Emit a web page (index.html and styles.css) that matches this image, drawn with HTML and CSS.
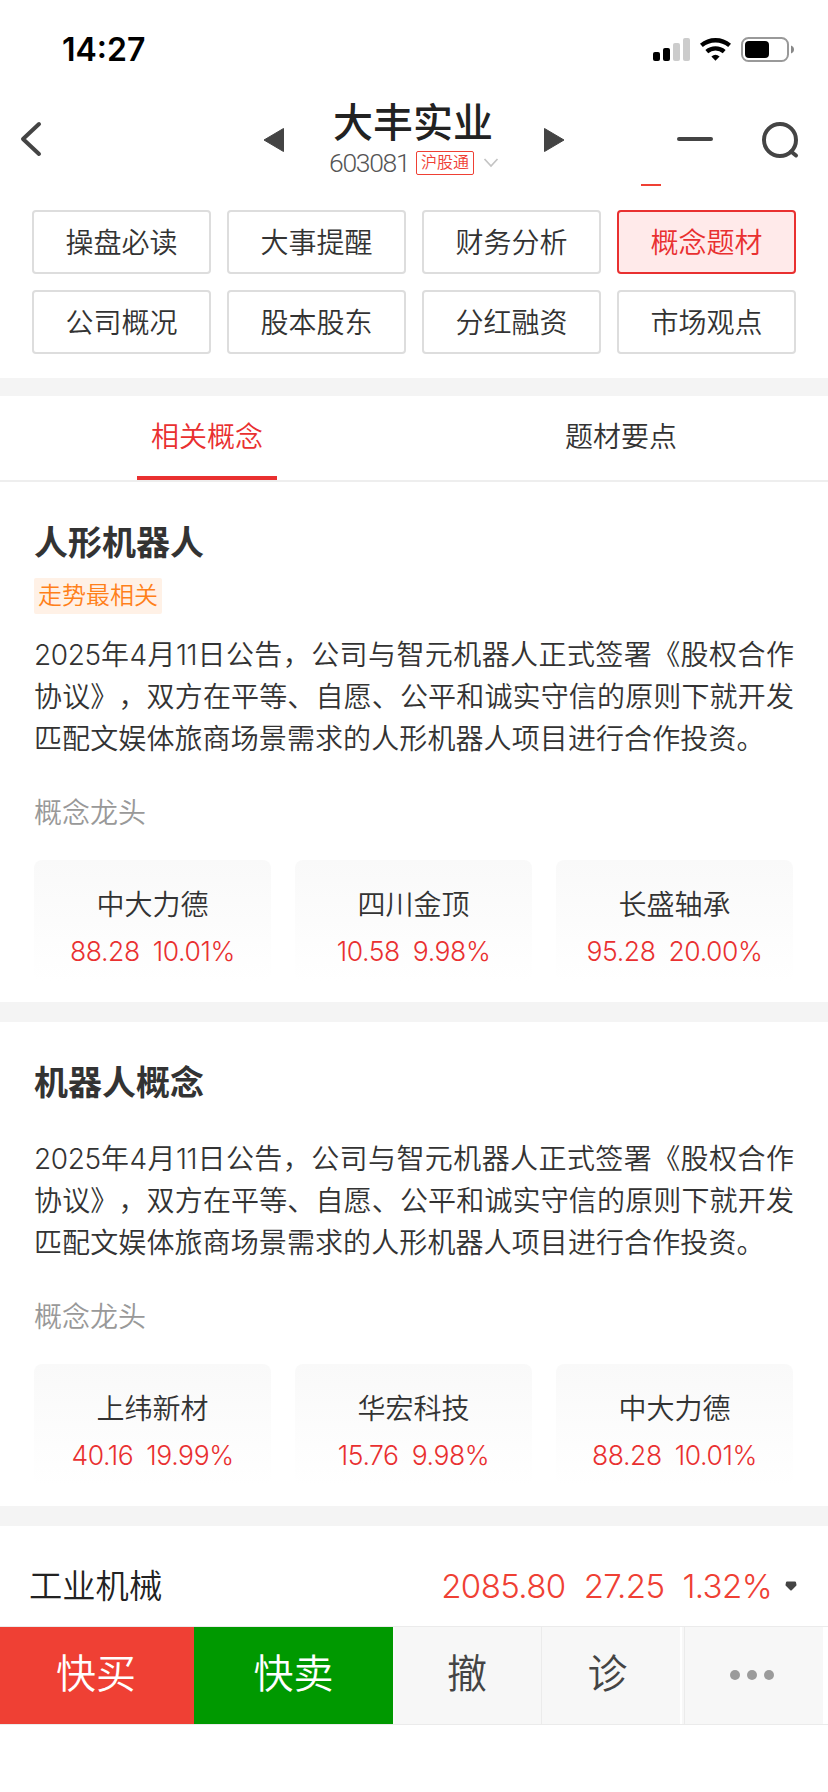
FILE: index.html
```html
<!DOCTYPE html>
<html lang="zh-CN">
<head>
<meta charset="utf-8">
<title>大丰实业</title>
<link rel="stylesheet" href="styles.css">
</head>
<body>
<div class="status">
  <span class="clock">14:27</span>
  <svg class="status-icons" width="144" height="28" viewBox="0 0 144 28">
    <rect x="1" y="15" width="7" height="9" rx="2"/>
    <rect x="11" y="11" width="7" height="13" rx="2"/>
    <rect x="21" y="6" width="7" height="18" rx="2" fill="#ccc"/>
    <rect x="31" y="1" width="7" height="23" rx="2" fill="#ccc"/>
    <g fill="none" stroke="#000" stroke-width="4.4">
      <path d="M49.4 8.4a22 22 0 0 1 28.2 0"/>
      <path d="M54.8 14.6a13.5 13.5 0 0 1 17.4 0"/>
    </g>
    <path d="M59.400 19.400q4.100-3.200 8.200 0l-4.100 4.300z"/>
    <rect x="90" y="1" width="46" height="23" rx="6.500" fill="none" stroke="#999" stroke-width="2"/>
    <rect x="93" y="4" width="24" height="17" rx="4"/>
    <path d="M139 8.500q3 1.200 3 4t-3 4z" fill="#888"/>
  </svg>
</div>

<header class="header">
  <svg class="back" width="24" height="38" viewBox="0 0 24 38"><path d="M20 4 4 19l16 15" fill="none" stroke="#444" stroke-width="4" stroke-linecap="round" stroke-linejoin="round"/></svg>
  <svg class="prev" width="22" height="26" viewBox="0 0 22 26"><path d="M20.500 1.500v23L1 13z" fill="#444" stroke="#444" stroke-linejoin="round"/></svg>
  <div class="stock">
    <h1 class="stock-name">大丰实业</h1>
    <div class="stock-meta">
      <span class="code">603081</span>
      <span class="hk">沪股通</span>
      <svg width="16" height="10" viewBox="0 0 16 10"><path d="m1.500 1 6.500 7L14.500 1" fill="none" stroke="#c4c4c4" stroke-width="1.700"/></svg>
    </div>
  </div>
  <svg class="next" width="22" height="26" viewBox="0 0 22 26"><path d="M1.500 1.500v23L21 13z" fill="#444" stroke="#444" stroke-linejoin="round"/></svg>
  <i class="minus"></i>
  <svg class="search" width="40" height="40" viewBox="0 0 40 40"><g fill="none" stroke="#444" stroke-width="4" stroke-linecap="round"><circle cx="20" cy="20" r="16"/><path d="m31 31.500 5 4"/></g></svg>
  <i class="mark"></i>
</header>

<nav class="tiles">
  <a class="tile">操盘必读</a><a class="tile">大事提醒</a><a class="tile">财务分析</a><a class="tile tile-on">概念题材</a>
  <a class="tile">公司概况</a><a class="tile">股本股东</a><a class="tile">分红融资</a><a class="tile">市场观点</a>
</nav>

<nav class="tabs">
  <a class="tab tab-on">相关概念</a>
  <a class="tab">题材要点</a>
</nav>

<section class="concept">
  <h2 class="concept-name">人形机器人</h2>
  <div class="tag-row"><span class="tag">走势最相关</span></div>
  <p class="desc"><span class="line fill"><span class="num">2025</span>年4月<span class="num">11</span>日公告，公司与智元机器人正式签署《股权合作</span><span class="line fill">协议》，双方在平等、自愿、公平和诚实守信的原则下就开发</span><span class="line">匹配文娱体旅商场景需求的人形机器人项目进行合作投资。</span></p>
  <h3 class="lead">概念龙头</h3>
  <div class="cards">
    <div class="card"><b>中大力德</b><p><span>88.28</span><span>10.01%</span></p></div>
    <div class="card"><b>四川金顶</b><p><span>10.58</span><span>9.98%</span></p></div>
    <div class="card"><b>长盛轴承</b><p><span>95.28</span><span>20.00%</span></p></div>
  </div>
</section>

<section class="concept">
  <h2 class="concept-name">机器人概念</h2>
  <p class="desc"><span class="line fill"><span class="num">2025</span>年4月<span class="num">11</span>日公告，公司与智元机器人正式签署《股权合作</span><span class="line fill">协议》，双方在平等、自愿、公平和诚实守信的原则下就开发</span><span class="line">匹配文娱体旅商场景需求的人形机器人项目进行合作投资。</span></p>
  <h3 class="lead">概念龙头</h3>
  <div class="cards">
    <div class="card"><b>上纬新材</b><p><span>40.16</span><span>19.99%</span></p></div>
    <div class="card"><b>华宏科技</b><p><span>15.76</span><span>9.98%</span></p></div>
    <div class="card"><b>中大力德</b><p><span>88.28</span><span>10.01%</span></p></div>
  </div>
</section>

<div class="industry">
  <span class="industry-name">工业机械</span>
  <span class="quote q1">2085.80</span><span class="quote q2">27.25</span><span class="quote q3">1.32%</span>
  <svg width="12" height="10" viewBox="0 0 12 10"><path d="M2 1.500h8L10.500 4 6 8.500 1.500 4z" fill="#444" stroke="#444" stroke-width="2" stroke-linejoin="round"/></svg>
</div>

<footer class="actions">
  <a class="act buy">快买</a>
  <a class="act sell">快卖</a>
  <a class="act cancel">撤</a>
  <a class="act diag">诊</a>
  <a class="act more"><i></i><i></i><i></i></a>
</footer>
</body>
</html>
```
FILE: styles.css
```css
* { box-sizing: border-box; margin: 0; padding: 0; }
body {
  width: 828px;
  height: 1792px;
  overflow: hidden;
  background: #fff;
  color: #333;
  font-family: Inter, "Noto Sans CJK SC", sans-serif;
  font-size: 28px;
  font-weight: 350;
  text-spacing-trim: space-all;
}
svg { display: block; flex: none; }
h1, h2, h3, b, i { font-style: normal; font-weight: inherit; }

.status {
  height: 100px;
  padding: 35px 32px 0 62px;
  display: flex;
  justify-content: space-between;
  align-items: flex-start;
}
.clock { font-size: 32px; line-height: 30px; font-weight: 600; color: #000; }
.status-icons { margin-top: 2px; }

.header {
  position: relative;
  height: 110px;
  display: flex;
  align-items: flex-start;
  color: #222;
}
.back { margin: 20px 0 0 19px; }
.prev { margin: 27px 0 0 220px; }
.stock { width: 171px; margin-left: 44px; }
.stock-name { font-size: 40px; line-height: 46px; font-weight: 500; padding-left: 4px; white-space: nowrap; }
.stock-meta { display: flex; align-items: center; height: 24px; margin-top: 5px; }
.code {
  width: 87px;
  font: 300 26.5px/22px Roboto, sans-serif;
  letter-spacing: -1.3px;
  color: #555;
}
.hk {
  width: 58px;
  height: 24px;
  margin-right: 9px;
  border: 1px solid #ef4034;
  border-radius: 2px;
  font-size: 16px;
  line-height: 21px;
  text-align: center;
  color: #ef4034;
}
.next { margin: 27px 0 0 43px; }
.minus { width: 36px; height: 4px; margin: 37px 0 0 112px; border-radius: 2px; background: #444; }
.search { margin: 20px 0 0 47px; }
.mark { position: absolute; left: 641px; top: 84px; width: 20px; height: 2px; background: #ef4034; }

.tiles {
  display: grid;
  grid-template-columns: repeat(4, 179px);
  gap: 16px;
  padding: 0 32px 24px;
}
.tile {
  height: 64px;
  border: 2px solid #ddd;
  border-radius: 4px;
  line-height: 62px;
  text-align: center;
}
.tile-on { border-color: #e93030; background: #ffeaea; color: #e93030; }

.tabs {
  height: 104px;
  display: flex;
  justify-content: space-around;
  border-top: 18px solid #f4f4f4;
  border-bottom: 2px solid #eee;
}
.tab { width: 140px; height: 84px; line-height: 82px; text-align: center; }
.tab-on { border-bottom: 4px solid #e93030; color: #e93030; }

.concept { height: 520px; padding: 39px 34px 0; }
.concept + .concept { height: 504px; border-top: 20px solid #f4f4f4; }
.concept-name { font-size: 34px; line-height: 44px; font-weight: 700; }
.tag-row { height: 36px; margin-top: 13px; display: flex; }
.tag {
  padding: 0 4px;
  border-radius: 2px;
  background: #fff1e6;
  font-size: 24px;
  line-height: 36px;
  color: #ff801a;
}
.desc { margin-top: 20px; }
.concept-name + .desc { margin-top: 33px; }
.line { display: block; height: 42px; line-height: 42px; letter-spacing: 0.1px; white-space: nowrap; }
.num { letter-spacing: -0.4px; }
.fill { text-align-last: justify; }
.lead { margin-top: 32px; font-size: 28px; line-height: 42px; color: #999; }
.cards { display: grid; grid-template-columns: repeat(3, 237px); gap: 24px; margin-top: 26px; }
.card {
  height: 122px;
  padding-top: 24px;
  border-radius: 8px;
  background: linear-gradient(#f9f9f9, #fff);
  text-align: center;
}
.card b { display: block; line-height: 42px; }
.card p {
  display: flex;
  justify-content: center;
  gap: 13px;
  margin-top: 4px;
  font-size: 26.5px;
  line-height: 42px;
  letter-spacing: -0.4px;
  color: #e93030;
}

.industry {
  height: 120px;
  padding: 20px 31px 0 29px;
  border-top: 20px solid #f4f4f4;
  display: flex;
  align-items: center;
}
.industry-name { flex: 1; font-size: 33.3px; line-height: 60px; color: #222; }
.quote { font-size: 33px; line-height: 60px; letter-spacing: -0.6px; color: #ef4034; }
.q1, .q2 { margin-right: 18px; }
.q3 { margin-right: 13px; }

.actions {
  height: 99px;
  display: flex;
  border-top: 1px solid #ebebeb;
  border-bottom: 1px solid #ebebeb;
}
.act { height: 97px; background: #f7f7f7; font-size: 40px; line-height: 94px; text-align: center; color: #444; }
.buy { width: 194px; padding-right: 2px; background: #ef4034; color: #fff; }
.sell { width: 199px; background: #090; color: #fff; }
.cancel { width: 148px; padding-right: 2px; border-left: 2px solid #fafafa; }
.diag { width: 139px; padding-right: 7px; border-left: 1px solid #ebebeb; }
.more {
  width: 139px;
  margin: 0 5px 0 4px;
  display: flex;
  align-items: center;
  gap: 7px;
  padding: 0 0 2px 45px;
  border-left: 1px solid #ebebeb;
  box-shadow: -2px 0 #f7f7f7;
}
.more i { width: 10px; height: 10px; border-radius: 50%; background: #9b9b9b; }
```
